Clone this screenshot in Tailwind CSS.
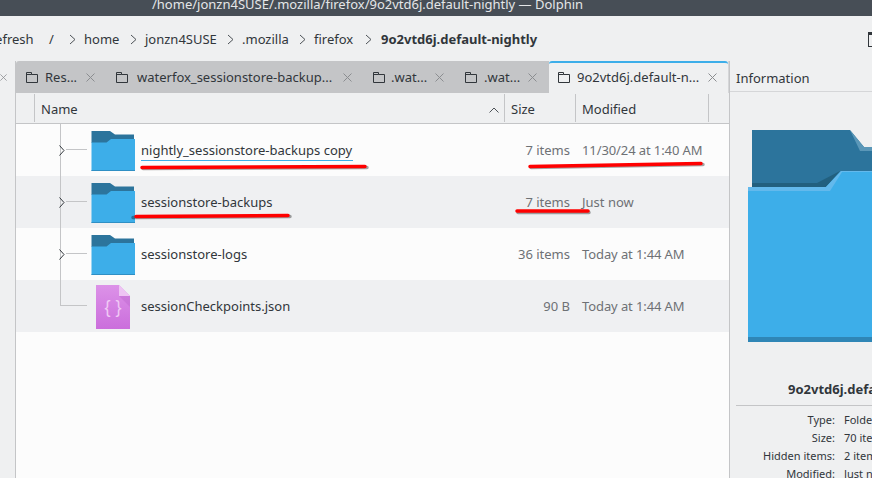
<!DOCTYPE html>
<html lang="en">
<head>
  <meta charset="UTF-8">
  <title>Dolphin</title>
  <script src="https://cdn.jsdelivr.net/npm/@tailwindcss/browser@4"></script>
</head>
<body class="bg-[#eff0f1] text-[#31363b] font-['Noto_Sans',sans-serif] text-[13px]">
  <svg class="hidden">
    <defs>
      <symbol id="folder" viewBox="0 0 44 40">
        <path d="M0.5 0H19L24 3.5H43V12H0.5Z" fill="#2c749c"/>
        <path d="M0.5 11.5H15.5L20 8H44V40H0.5Z" fill="#3daee9"/>
        <path d="M0.5 39H44V40H0.5Z" fill="#2f8fc4"/>
      </symbol>
      <symbol id="tabfolder" viewBox="0 0 12 12">
        <path d="M0.5 1.5H5.5V3.5H11.5V11.5H0.5Z M0.5 3.5H5.5" fill="none" stroke="#31363b"/>
      </symbol>
      <symbol id="close" viewBox="0 0 9 9">
        <path d="M0.5 0.5L8.5 8.5M8.5 0.5L0.5 8.5" stroke="#8b8d90" stroke-width="1"/>
      </symbol>
      <symbol id="crumb" viewBox="0 0 7 11">
        <path d="M1 1L6 5.5L1 10" fill="none" stroke="#4d5257"/>
      </symbol>
      <symbol id="expander" viewBox="0 0 6 11">
        <path d="M0.5 0.5L5 5.5L0.5 10.5" fill="none" stroke="#31363b"/>
      </symbol>
    </defs>
  </svg>

  <div class="relative w-[872px] h-[478px] overflow-hidden flex flex-col">
    <!-- Title bar -->
    <div class="h-4 bg-[#474e56] text-[#e4e6e8] text-[13px] leading-none overflow-hidden shrink-0">
      <div class="ml-[152px] -mt-[2px] whitespace-nowrap">/home/jonzn4SUSE/.mozilla/firefox/9o2vtd6j.default-nightly — Dolphin</div>
    </div>

    <!-- Toolbar and breadcrumb -->
    <div class="h-[45px] shrink-0 flex items-center pt-[2px] whitespace-nowrap relative">
      <span class="w-[49px] -ml-[13px] shrink-0 box-content pr-[13px]">Refresh</span>
      <span class="w-[20px] shrink-0">/</span>
      <svg class="w-[7px] h-[11px] mr-[8px] shrink-0"><use href="#crumb"/></svg>
      <span class="w-[46px] shrink-0">home</span>
      <svg class="w-[7px] h-[11px] mr-[8px] shrink-0"><use href="#crumb"/></svg>
      <span class="w-[82px] shrink-0">jonzn4SUSE</span>
      <svg class="w-[7px] h-[11px] mr-[8px] shrink-0"><use href="#crumb"/></svg>
      <span class="w-[57px] shrink-0">.mozilla</span>
      <svg class="w-[7px] h-[11px] mr-[8px] shrink-0"><use href="#crumb"/></svg>
      <span class="w-[51px] shrink-0">firefox</span>
      <svg class="w-[7px] h-[11px] mr-[9px] shrink-0"><use href="#crumb"/></svg>
      <span class="font-bold">9o2vtd6j.default-nightly</span>
      <div class="absolute left-[868px] top-[16px] w-4 h-[15px] border border-[#31363b] border-t-[3px]"></div>
    </div>

    <div class="flex flex-1 min-h-0">
      <!-- Left pane edge -->
      <div class="w-[16px] shrink-0 border-r border-[#c4c5c7] flex flex-col">
        <div class="h-[32px] flex items-center justify-end"><svg class="w-[9px] h-[9px] mr-[8px]"><use href="#close"/></svg></div>
      </div>

      <!-- Main view -->
      <div class="w-[714px] shrink-0 flex flex-col border-r border-[#c4c5c7]">
        <!-- Tabs -->
        <div class="h-[32px] shrink-0 flex whitespace-nowrap">
          <div class="flex flex-1 bg-[#c4c5c7] rounded-tl-[3px]">
            <div class="w-[90px] flex items-center pl-[10px]">
              <svg class="w-3 h-3 mr-[7px]"><use href="#tabfolder"/></svg><span class="w-[41px] pt-[2px]">Res...</span><svg class="w-[9px] h-[9px]"><use href="#close"/></svg>
            </div>
            <div class="w-[257px] flex items-center pl-[10px]">
              <svg class="w-3 h-3 mr-[9px]"><use href="#tabfolder"/></svg><span class="w-[206px] pt-[2px]">waterfox_sessionstore-backup...</span><svg class="w-[9px] h-[9px]"><use href="#close"/></svg>
            </div>
            <div class="w-[92px] flex items-center pl-[10px]">
              <svg class="w-3 h-3 mr-[6px]"><use href="#tabfolder"/></svg><span class="w-[44px] pt-[2px]">.wat...</span><svg class="w-[9px] h-[9px]"><use href="#close"/></svg>
            </div>
            <div class="w-[94px] flex items-center pl-[10px]">
              <svg class="w-3 h-3 mr-[7px]"><use href="#tabfolder"/></svg><span class="w-[44px] pt-[2px]">.wat...</span><svg class="w-[9px] h-[9px]"><use href="#close"/></svg>
            </div>
          </div>
          <div class="w-[179px] shrink-0 flex items-center pl-[9px] pb-[2px] bg-[#eff0f1] border-t-2 border-[#3daee9] rounded-t-[3px]">
            <svg class="w-3 h-3 mr-[7px]"><use href="#tabfolder"/></svg><span class="w-[131px] pt-[2px]">9o2vtd6j.default-n...</span><svg class="w-[9px] h-[9px]"><use href="#close"/></svg>
          </div>
          <div class="w-px shrink-0 bg-[#d5d6d8]"></div>
        </div>

        <!-- Column headers -->
        <div class="h-[31px] shrink-0 flex border-b border-[#c4c5c7]">
          <div class="w-[19px] shrink-0 border-r border-[#c4c5c7] my-px"></div>
          <div class="w-[470px] shrink-0 border-r border-[#c4c5c7] my-px pl-[6px] pr-[5px] pt-[4px] flex items-center justify-between">
            <span>Name</span>
            <svg class="w-[10px] h-[6px]" viewBox="0 0 10 6"><path d="M0.5 5.5L5 1L9.5 5.5" fill="none" stroke="#4d5257"/></svg>
          </div>
          <div class="w-[71px] shrink-0 border-r border-[#c4c5c7] my-px pl-[6px] pt-[4px] flex items-center">Size</div>
          <div class="w-[133px] shrink-0 border-r border-[#c4c5c7] my-px pl-[6px] pt-[4px] flex items-center">Modified</div>
        </div>

        <!-- Rows -->
        <div class="flex-1 bg-[#fcfcfc]">
          <div class="h-[52px] flex items-center pt-[2px]">
            <div class="w-[75px] h-[52px] -mt-[2px] self-start shrink-0 relative">
              <div class="absolute left-[44px] top-0 bottom-0 w-px bg-[#c4c5c7]"></div>
              <div class="absolute left-[50px] top-[25px] w-[21px] h-px bg-[#c4c5c7]"></div>
              <svg class="absolute left-[43px] top-[21px] w-[6px] h-[11px]"><use href="#expander"/></svg>
            </div>
            <svg class="w-[44px] h-[40px] shrink-0"><use href="#folder"/></svg>
            <div class="w-[345px] pl-[4px] shrink-0">
              <div class="inline-flex flex-col px-[2px]">
                <span class="leading-[17px]">nightly_sessionstore-backups copy</span>
                <div class="h-px bg-[#3daee9] mt-[1px] -mr-[1px]"></div>
              </div>
            </div>
            <div class="w-[90px] shrink-0 text-right text-[#6e7175]">7 items</div>
            <div class="pl-3 text-[#6e7175] tracking-[-0.1px] whitespace-nowrap">11/30/24 at 1:40 AM</div>
          </div>
          <div class="h-[52px] flex items-center pt-[2px] bg-[#eff0f2]">
            <div class="w-[75px] h-[52px] -mt-[2px] self-start shrink-0 relative">
              <div class="absolute left-[44px] top-0 bottom-0 w-px bg-[#c4c5c7]"></div>
              <div class="absolute left-[50px] top-[25px] w-[21px] h-px bg-[#c4c5c7]"></div>
              <svg class="absolute left-[43px] top-[21px] w-[6px] h-[11px]"><use href="#expander"/></svg>
            </div>
            <svg class="w-[44px] h-[40px] shrink-0"><use href="#folder"/></svg>
            <div class="w-[345px] pl-[6px] shrink-0">sessionstore-backups</div>
            <div class="w-[90px] shrink-0 text-right text-[#6e7175]">7 items</div>
            <div class="pl-3 text-[#6e7175] whitespace-nowrap">Just now</div>
          </div>
          <div class="h-[52px] flex items-center pt-[2px]">
            <div class="w-[75px] h-[52px] -mt-[2px] self-start shrink-0 relative">
              <div class="absolute left-[44px] top-0 bottom-0 w-px bg-[#c4c5c7]"></div>
              <div class="absolute left-[50px] top-[25px] w-[21px] h-px bg-[#c4c5c7]"></div>
              <svg class="absolute left-[43px] top-[21px] w-[6px] h-[11px]"><use href="#expander"/></svg>
            </div>
            <svg class="w-[44px] h-[40px] shrink-0"><use href="#folder"/></svg>
            <div class="w-[345px] pl-[6px] shrink-0">sessionstore-logs</div>
            <div class="w-[90px] shrink-0 text-right text-[#6e7175]">36 items</div>
            <div class="pl-3 text-[#6e7175] tracking-[-0.1px] whitespace-nowrap">Today at 1:44 AM</div>
          </div>
          <div class="h-[52px] flex items-center pt-[2px] bg-[#eff0f2]">
            <div class="w-[75px] h-[52px] -mt-[2px] self-start shrink-0 relative">
              <div class="absolute left-[44px] top-0 h-[26px] w-[27px] border-l border-b border-[#c4c5c7]"></div>
            </div>
            <div class="w-[44px] shrink-0 flex justify-center">
              <svg class="w-[34px] h-[44px]" viewBox="0 0 34 44">
                <defs>
                  <linearGradient id="json" x1="0" y1="0" x2="0" y2="1">
                    <stop offset="0" stop-color="#dc92e8"/>
                    <stop offset="1" stop-color="#cb6edc"/>
                  </linearGradient>
                </defs>
                <path d="M0 0H23L34 11V44H0Z" fill="url(#json)"/>
                <path d="M23 11H34V22Z" fill="#b85fc9" opacity="0.35"/>
                <path d="M23 0L34 11H23Z" fill="#eec4f3"/>
                <text x="17" y="28" text-anchor="middle" font-family="Liberation Sans" font-size="18" fill="#f0c9f5">{ }</text>
              </svg>
            </div>
            <div class="w-[345px] pl-[6px] shrink-0">sessionCheckpoints.json</div>
            <div class="w-[90px] shrink-0 text-right text-[#6e7175]">90 B</div>
            <div class="pl-3 text-[#6e7175] tracking-[-0.1px] whitespace-nowrap">Today at 1:44 AM</div>
          </div>
        </div>
      </div>

      <!-- Information panel -->
      <div class="flex-1 min-w-0 flex flex-col overflow-hidden whitespace-nowrap">
        <div class="h-[31px] shrink-0 pl-[6px] pt-[5px] flex items-center border-b border-[#d5d6d8]">Information</div>
        <div class="h-[250px] shrink-0 pl-[18px] pt-[38px]">
          <svg class="w-[124px] h-[212px] block" viewBox="0 0 124 212">
            <path d="M4 0H102L116 17H124V60H4Z" fill="#2c749c"/>
            <path d="M102 0L116 17H124V21H112Z" fill="#5a97b8"/>
            <path d="M4 53H69L92 41L78 57H4Z" fill="#22607f"/>
            <path d="M0 57H78L93 41H124V212H0Z" fill="#3daee9"/>
            <path d="M0 57H78L93 41H124V42H94L82 61H0Z" fill="#63b9ec"/>
            <path d="M0 207H124V212H0Z" fill="#2f86b6"/>
          </svg>
        </div>
        <div class="h-[63px] shrink-0 flex items-end pb-[6px] pl-[58px] font-bold text-[13px]">9o2vtd6j.default-nightly</div>
        <div class="ml-[6px] border-t border-[#c4c5c7] pt-[5px] text-[11px] leading-[18px]">
          <div class="flex"><span class="w-[99px] text-right shrink-0">Type:</span><span class="pl-[9px]">Folder</span></div>
          <div class="flex"><span class="w-[99px] text-right shrink-0">Size:</span><span class="pl-[9px]">70 items</span></div>
          <div class="flex"><span class="w-[99px] text-right shrink-0">Hidden items:</span><span class="pl-[9px]">2 items</span></div>
          <div class="flex"><span class="w-[99px] text-right shrink-0">Modified:</span><span class="pl-[9px]">Just now</span></div>
        </div>
      </div>
    </div>

    <!-- Red marker annotations drawn over the screenshot -->
    <svg class="absolute inset-0 w-[872px] h-[478px] pointer-events-none" viewBox="0 0 872 478">
      <g fill="none" stroke-linecap="round" stroke-width="3.5">
        <path d="M143 168.5L367 167.5M133 217.5L290 216.5M531 167.5L703 164.5M518 212.5L589 212.5" stroke="#000" opacity="0.35"/>
        <path d="M142 167.5L365 166.5M136 216.5L288 215.5M530 166.5L701 163.5M517 211L588 211" stroke="#f00"/>
      </g>
    </svg>
  </div>
</body>
</html>
